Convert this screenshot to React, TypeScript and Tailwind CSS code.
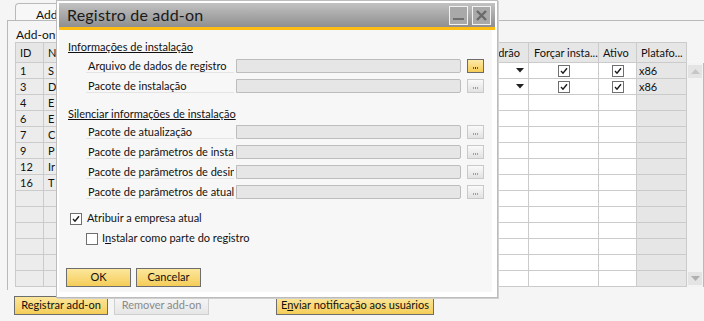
import React from 'react';

const font = { fontFamily: 'Lato, "Liberation Sans", sans-serif' };

// small square check box used in the grid and the dialog
const Check = ({ checked }: { checked: boolean }) => (
  <div className="w-[12px] h-[12px] bg-white border border-[#6f6f6f] flex items-center justify-center">
    {checked && (
      <svg width="8" height="8" viewBox="0 0 8 8">
        <path d="M1 4 L3 6.2 L7 1.2" fill="none" stroke="#1b1b1b" strokeWidth="1.4" />
      </svg>
    )}
  </div>
);

const Browse = ({ active }: { active?: boolean }) => (
  <div
    className={
      active
        ? 'w-[17px] h-[14px] border border-[#6b6b6b] bg-gradient-to-b from-[#fdeaa6] to-[#f5cc55] flex items-end justify-center pb-[3px] gap-[1px]'
        : 'w-[17px] h-[14px] border border-[#c9c9c9] bg-gradient-to-b from-[#fafafa] to-[#e2e2e2] flex items-end justify-center pb-[3px] gap-[1px]'
    }
  >
    <span className={active ? 'w-[1px] h-[2px] bg-[#b23a2a]' : 'w-[1px] h-[2px] bg-[#c88f8a]'} />
    <span className={active ? 'w-[1px] h-[2px] bg-[#3a3a3a]' : 'w-[1px] h-[2px] bg-[#9a9a9a]'} />
    <span className={active ? 'w-[1px] h-[2px] bg-[#b23a2a]' : 'w-[1px] h-[2px] bg-[#8fa0c8]'} />
  </div>
);

const FieldRow = ({ label, active }: { label: string; active?: boolean }) => (
  <div className="flex items-center h-[14px]">
    <div className="w-[148px] ml-[18px] h-[14px] border-b border-[#e4e4e4] pl-[2px] overflow-hidden whitespace-nowrap leading-[13px] text-[#111]">
      {label}
    </div>
    <div className="ml-[2px] w-[225px] h-[14px] bg-[#e6e6e6] border border-[#bdbdbd] rounded-r-[2px]" />
    <div className="ml-[6px]">
      <Browse active={active} />
    </div>
  </div>
);

const YellowBtn = ({ children, w }: { children: React.ReactNode; w: string }) => (
  <div
    className={`${w} h-[19px] border border-[#6e6e6e] bg-gradient-to-b from-[#fce79b] to-[#f5cd57] flex items-center justify-center text-[#111]`}
  >
    {children}
  </div>
);

const ids = ['1', '3', '4', '6', '7', '9', '12', '16'];
const names = ['S', 'D', 'E', 'E', 'C', 'P', 'Ir', 'T'];

const GridRow = ({ i }: { i: number }) => {
  const data = i < 2;
  return (
    <div className="flex h-[16px] border-b border-[#cbcbcb]">
      <div className="w-[29px] bg-[#ececec] border-l border-r border-[#cbcbcb] pl-[4px] leading-[15px]">{ids[i] ?? ''}</div>
      <div className="w-[256px] bg-[#ececec] border-r border-[#cbcbcb] pl-[4px] leading-[15px]">{names[i] ?? ''}</div>
      <div className="w-[140px] bg-white border-r border-[#cbcbcb]" />
      <div className="w-[89px] bg-white border-r border-[#cbcbcb] flex items-center justify-end pr-[4px]">
        {data && (
          <svg width="8" height="5" viewBox="0 0 8 5">
            <path d="M0 0 H8 L4 4.5 Z" fill="#222" />
          </svg>
        )}
      </div>
      <div className="w-[70px] bg-white border-r border-[#cbcbcb] flex items-center justify-center">
        {data && <Check checked />}
      </div>
      <div className="w-[38px] bg-white border-r border-[#cbcbcb] flex items-center justify-center">
        {data && <Check checked />}
      </div>
      <div className="w-[50px] bg-[#e6e6e6] border-r border-[#cbcbcb] pl-[2px] leading-[15px]">{data ? 'x86' : ''}</div>
    </div>
  );
};

export default function App() {
  return (
    <div className="relative w-[704px] h-[321px] bg-[#f5f5f5] text-[11px] text-[#111] overflow-hidden" style={font}>
      {/* tab strip */}
      <div className="h-[20px] flex items-end">
        <div className="ml-[15px] w-[90px] h-[17px] bg-[#f7f7f7] border border-b-0 border-[#b9b9b9] rounded-tl-[4px] pl-[20px] pt-[2px] text-[12px]">
          Add-ons
        </div>
      </div>

      {/* panel */}
      <div className="ml-[7px] border-t border-l border-[#b9b9b9] h-[270px]">
        <div className="pl-[8px] pt-[8px] h-[21px] leading-[12px] text-[12px]">Add-ons</div>
        <div className="ml-[7px] flex">
          <div className="w-[672px]">
            <div className="flex h-[21px] bg-[#e6e6e6] border-t border-b border-[#cbcbcb]">
              <div className="w-[29px] border-l border-r border-[#cbcbcb] pl-[4px] leading-[19px]">ID</div>
              <div className="w-[256px] border-r border-[#cbcbcb] pl-[4px] leading-[19px]">Nome</div>
              <div className="w-[140px] border-r border-[#cbcbcb] pl-[4px] leading-[19px]">Versão</div>
              <div className="w-[89px] border-r border-[#cbcbcb] pr-[8px] leading-[19px] text-right">Modo padrão</div>
              <div className="w-[70px] border-r border-[#cbcbcb] pl-[5px] leading-[19px] whitespace-nowrap overflow-hidden">Forçar insta...</div>
              <div className="w-[38px] border-r border-[#cbcbcb] pl-[4px] leading-[19px]">Ativo</div>
              <div className="w-[50px] border-r border-[#cbcbcb] pl-[4px] leading-[19px] whitespace-nowrap overflow-hidden">Platafo...</div>
            </div>
            {Array.from({ length: 14 }).map((_, i) => (
              <GridRow key={i} i={i} />
            ))}
          </div>
          <div className="w-[17px] h-[224px] mt-[21px] bg-[#f3f3f3] border-r border-[#b9b9b9] flex flex-col justify-between items-center py-[2px]">
            <div className="w-[14px] h-[13px] bg-[#e4e4e4] flex items-center justify-center">
              <svg width="9" height="5" viewBox="0 0 9 5">
                <path d="M0 5 H9 L4.5 0 Z" fill="#c6c6c6" />
              </svg>
            </div>
            <div className="w-[14px] h-[13px] bg-[#e4e4e4] flex items-center justify-center">
              <svg width="9" height="5" viewBox="0 0 9 5">
                <path d="M0 0 H9 L4.5 5 Z" fill="#b0b0b0" />
              </svg>
            </div>
          </div>
        </div>
      </div>

      {/* bottom buttons */}
      <div className="absolute left-0 top-[296px] w-full flex items-center">
        <div className="ml-[14px]">
          <YellowBtn w="w-[94px]">Registrar add-on</YellowBtn>
        </div>
        <div className="ml-[6px] w-[95px] h-[19px] border border-[#cfcfcf] bg-gradient-to-b from-[#f6f6f6] to-[#e6e6e6] flex items-center justify-center text-[#8a8a8a]">
          Remover add-on
        </div>
        <div className="ml-[67px]">
          <YellowBtn w="w-[158px]">
            <span>
              E<span className="underline">n</span>viar notificação aos usuários
            </span>
          </YellowBtn>
        </div>
      </div>

      {/* dialog window */}
      <div className="absolute left-[56px] top-0 w-[442px] h-[298px] border border-[#bcbcbc] bg-white p-[2px] shadow-[1px_1px_0_#d0d0d0]">
        <div className="h-[24px] bg-gradient-to-b from-[#c2c2c2] to-[#8f8f8f] flex items-center justify-between pl-[8px] pr-[4px]">
          <span className="text-[16px] leading-[20px] text-[#1a1a1a] tracking-[0.2px]">Registro de add-on</span>
          <div className="flex gap-[4px]">
            <div className="w-[19px] h-[19px] border border-[#f2f2f2] bg-[#a9a9a9] flex items-end justify-center pb-[4px]">
              <div className="w-[11px] h-[2px] bg-[#6f6f6f]" />
            </div>
            <div className="w-[19px] h-[19px] border border-[#f2f2f2] bg-[#a9a9a9] flex items-center justify-center">
              <svg width="11" height="11" viewBox="0 0 11 11">
                <path d="M1 1 L10 10 M10 1 L1 10" stroke="#6a6a6a" strokeWidth="2.4" />
              </svg>
            </div>
          </div>
        </div>
        <div className="h-[3px] bg-[#fdbd14]" />
        <div className="h-[262px] bg-[#f7f7f7] mr-[3px] pl-[9px] pt-[10px]">
          <div className="h-[13px] leading-[13px] underline">Informações de instalação</div>
          <div className="mt-[6px] flex flex-col gap-[6px]">
            <FieldRow label="Arquivo de dados de registro" active />
            <FieldRow label="Pacote de instalação" />
          </div>
          <div className="mt-[14px] h-[13px] leading-[13px] underline">Silenciar informações de instalação</div>
          <div className="mt-[5px] flex flex-col gap-[6px]">
            <FieldRow label="Pacote de atualização" />
            <FieldRow label="Pacote de parâmetros de instalação" />
            <FieldRow label="Pacote de parâmetros de desinstalação" />
            <FieldRow label="Pacote de parâmetros de atualização" />
          </div>
          <div className="mt-[13px] flex items-center gap-[5px] ml-[2px] h-[13px]">
            <Check checked />
            <span>Atribuir a empresa atual</span>
          </div>
          <div className="mt-[7px] flex items-center gap-[4px] ml-[18px] h-[13px]">
            <Check checked={false} />
            <span>
              I<span className="underline">n</span>stalar como parte do registro
            </span>
          </div>
          <div className="mt-[23px] flex gap-[5px] ml-[-2px]">
            <YellowBtn w="w-[65px]">OK</YellowBtn>
            <YellowBtn w="w-[65px]">Cancelar</YellowBtn>
          </div>
        </div>
      </div>
    </div>
  );
}
